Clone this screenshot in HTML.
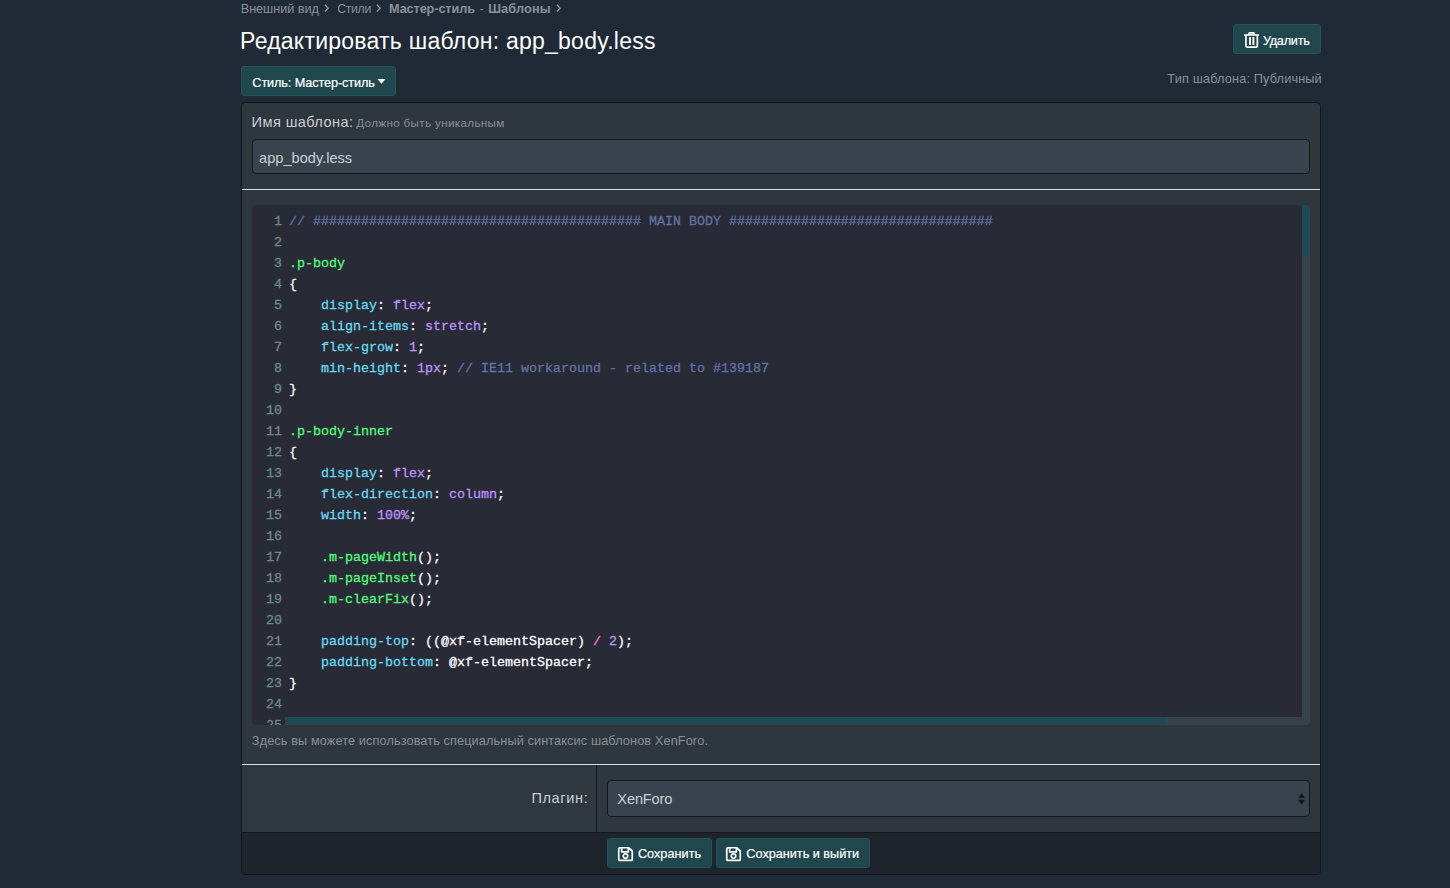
<!DOCTYPE html>
<html lang="ru">
<head>
<meta charset="utf-8">
<title>Редактировать шаблон: app_body.less</title>
<style>
*{box-sizing:border-box;margin:0;padding:0}
html,body{width:1450px;height:888px;overflow:hidden}
body{background:#202a36;color:#c9ced3;font-family:"Liberation Sans",sans-serif;font-size:15px;position:relative}
.t{position:absolute;white-space:nowrap;line-height:20px;height:20px}
.g{color:#8b9096}
.w{color:#fff}
.l{color:#c9ced3}
svg{position:absolute;overflow:visible}
.btn{position:absolute;display:block;padding:0;font:inherit;color:inherit;height:30px;background:#1f474d;border:1px solid #235258;border-radius:3px}
.box{position:absolute;left:241px;top:102px;width:1080px;height:773px;background:#2e363e;border:1px solid #13161d;border-radius:4px;overflow:hidden}
.input{position:absolute;background:#39434d;border:1px solid #15171f;border-radius:4px}
.hr{position:absolute;left:0;width:1078px;height:1px;background:#dcdcdc}
.cm{position:absolute;left:10px;top:102px;width:1058px;height:520px;background:#282a36;border-radius:4px;overflow:hidden;font-family:"Liberation Mono",monospace;font-size:13.333px;-webkit-text-stroke:0.3px;color:#f8f8f2}
.cm pre{position:absolute;left:37px;font-family:inherit;font-size:inherit;line-height:21px;height:21px;white-space:pre}
.cm .ln{position:absolute;left:0;width:30px;text-align:right;line-height:21px;height:21px;color:#6d8a88}
.c{color:#6272a4}.q{color:#50fa7b}.p{color:#66d9ef}.a{color:#bd93f9}.o{color:#ff79c6}.v{color:#fff}
.vtrack{position:absolute;right:0;top:0;width:8px;height:520px;background:#38424c}
.vthumb{position:absolute;right:0.6px;top:0.4px;width:7px;height:50.4px;background:#1d4a54;border-radius:2px}
.htrack{position:absolute;left:33px;bottom:0;width:1025px;height:8px;background:#38424c}
.hthumb{position:absolute;left:33.4px;bottom:0.6px;width:880.2px;height:7px;background:#1d4a54;border-radius:0 2px 2px 0}
.dt{position:absolute;left:0;top:662px;width:355px;height:68px;background:#2f373f;border-right:1px solid #13161d}
.foot{position:absolute;left:0;top:729px;width:1078px;height:43px;background:#1e242c;border-top:1px solid #13161d}
#del,#sty,#s1,#s2{-webkit-text-stroke:0.2px}
#c1{left:240.72px;top:-1.40px;font-size:12.70px;letter-spacing:-0.042px}
#c2{left:337.13px;top:-1.26px;font-size:12.30px;letter-spacing:-0.325px}
#c3{left:389.01px;top:-1.40px;font-size:12.70px;letter-spacing:-0.098px}
#c4{left:479.52px;top:-1.40px;font-size:12.70px;letter-spacing:0.000px}
#c5{left:488.18px;top:-1.40px;font-size:12.70px;letter-spacing:0.168px}
#ttl{left:240.08px;top:30.93px;font-size:23.00px;letter-spacing:0.240px}
#del{left:28.90px;top:5.50px;font-size:12.70px;letter-spacing:-0.252px}
#tip{left:1167.32px;top:68.60px;font-size:12.70px;letter-spacing:0.164px}
#sty{left:10.34px;top:5.60px;font-size:12.70px;letter-spacing:-0.112px}
#lbl{left:9.62px;top:8.74px;font-size:14.60px;letter-spacing:0.393px}
#lbh{left:114.25px;top:9.75px;font-size:11.70px;letter-spacing:0.318px}
#inp{left:6.08px;top:7.94px;font-size:14.60px;letter-spacing:-0.002px}
#hnt{left:9.85px;top:628.30px;font-size:12.70px;letter-spacing:0.124px}
#plg{left:289.41px;top:23.14px;font-size:14.60px;letter-spacing:0.603px}
#xf{left:9.35px;top:7.74px;font-size:14.60px;letter-spacing:-0.156px}
#s1{left:29.89px;top:4.60px;font-size:12.70px;letter-spacing:0.020px}
#s2{left:29.34px;top:4.60px;font-size:12.70px;letter-spacing:-0.012px}
</style>
</head>
<body>
<nav class="crumbs">
<a class="t g" id="c1">Внешний вид</a>
<svg id="ch1" style="left:324.0px;top:4.3px" width="5" height="8" viewBox="0 0 5 8"><path d="M0.9 0.8L4.1 4.15L0.9 7.5" fill="none" stroke="#969ba1" stroke-width="1.3"/></svg>
<a class="t g" id="c2">Стили</a>
<svg id="ch2" style="left:376.1px;top:4.3px" width="5" height="8" viewBox="0 0 5 8"><path d="M0.9 0.8L4.1 4.15L0.9 7.5" fill="none" stroke="#969ba1" stroke-width="1.3"/></svg>
<a class="t g" id="c3"><b>Мастер-стиль</b></a>
<span class="t g" id="c4">-</span>
<a class="t g" id="c5"><b>Шаблоны</b></a>
<svg id="ch3" style="left:555.9px;top:4.3px" width="5" height="8" viewBox="0 0 5 8"><path d="M0.9 0.8L4.1 4.15L0.9 7.5" fill="none" stroke="#969ba1" stroke-width="1.3"/></svg>
</nav>
<header>
<h1 class="t w" id="ttl" style="font-weight:400">Редактировать шаблон: app_body.less</h1>
<a class="btn" style="left:1233px;top:24px;width:88px"><svg id="trash" style="left:9.8px;top:7px" width="15.1" height="16" viewBox="0 0 15.1 16"><path d="M4.3 3L5.3 0.8H9.8L10.8 3" fill="#9aa9ad" stroke="#fff" stroke-width="1.4"/><path d="M0 3H15.1 M1.95 3V13.9Q1.95 15.15 3.2 15.15H12.1Q13.35 15.15 13.35 13.9V3" fill="none" stroke="#fff" stroke-width="1.7"/><path d="M5.95 4.9V13 M9.4 4.9V13" fill="none" stroke="#fff" stroke-width="1.9"/></svg><span class="t w" id="del">Удалить</span></a>
<span class="t g" id="tip">Тип шаблона: Публичный</span>
<a class="btn" style="left:241px;top:66px;width:155px"><span class="t w" id="sty">Стиль: Мастер-стиль</span><svg id="caret" style="left:134.5px;top:12.3px" width="9" height="5" viewBox="0 0 9 5"><path d="M0.4 0h8.2L4.5 4.8z" fill="#fff"/></svg></a>
</header>
<form class="box">
<label class="t l" id="lbl">Имя шаблона:</label>
<span class="t g" id="lbh">Должно быть уникальным</span>
<div class="input" style="left:10px;top:36px;width:1058px;height:35px"><span class="t l" id="inp">app_body.less</span></div>
<div class="hr" style="top:86px"></div>
<div class="cm" id="cm">
<div class="ln" style="top:5.5px">1</div><pre style="top:5.5px"><span class="c">// ######################################### MAIN BODY #################################</span></pre>
<div class="ln" style="top:26.5px">2</div>
<div class="ln" style="top:47.5px">3</div><pre style="top:47.5px"><span class="q">.p-body</span></pre>
<div class="ln" style="top:68.5px">4</div><pre style="top:68.5px">{</pre>
<div class="ln" style="top:89.5px">5</div><pre style="top:89.5px">    <span class="p">display</span>: <span class="a">flex</span>;</pre>
<div class="ln" style="top:110.5px">6</div><pre style="top:110.5px">    <span class="p">align-items</span>: <span class="a">stretch</span>;</pre>
<div class="ln" style="top:131.5px">7</div><pre style="top:131.5px">    <span class="p">flex-grow</span>: <span class="a">1</span>;</pre>
<div class="ln" style="top:152.5px">8</div><pre style="top:152.5px">    <span class="p">min-height</span>: <span class="a">1px</span>; <span class="c">// IE11 workaround - related to #139187</span></pre>
<div class="ln" style="top:173.5px">9</div><pre style="top:173.5px">}</pre>
<div class="ln" style="top:194.5px">10</div>
<div class="ln" style="top:215.5px">11</div><pre style="top:215.5px"><span class="q">.p-body-inner</span></pre>
<div class="ln" style="top:236.5px">12</div><pre style="top:236.5px">{</pre>
<div class="ln" style="top:257.5px">13</div><pre style="top:257.5px">    <span class="p">display</span>: <span class="a">flex</span>;</pre>
<div class="ln" style="top:278.5px">14</div><pre style="top:278.5px">    <span class="p">flex-direction</span>: <span class="a">column</span>;</pre>
<div class="ln" style="top:299.5px">15</div><pre style="top:299.5px">    <span class="p">width</span>: <span class="a">100%</span>;</pre>
<div class="ln" style="top:320.5px">16</div>
<div class="ln" style="top:341.5px">17</div><pre style="top:341.5px">    <span class="q">.m-pageWidth</span>();</pre>
<div class="ln" style="top:362.5px">18</div><pre style="top:362.5px">    <span class="q">.m-pageInset</span>();</pre>
<div class="ln" style="top:383.5px">19</div><pre style="top:383.5px">    <span class="q">.m-clearFix</span>();</pre>
<div class="ln" style="top:404.5px">20</div>
<div class="ln" style="top:425.5px">21</div><pre style="top:425.5px">    <span class="p">padding-top</span>: ((<span class="v">@xf-elementSpacer</span>) <span class="o">/</span> <span class="a">2</span>);</pre>
<div class="ln" style="top:446.5px">22</div><pre style="top:446.5px">    <span class="p">padding-bottom</span>: <span class="v">@xf-elementSpacer</span>;</pre>
<div class="ln" style="top:467.5px">23</div><pre style="top:467.5px">}</pre>
<div class="ln" style="top:488.5px">24</div>
<div class="ln" style="top:509.5px">25</div>
<div class="vtrack"></div><div class="vthumb"></div>
<div class="htrack"></div><div class="hthumb"></div>
</div>
<p class="t g" id="hnt">Здесь вы можете использовать специальный синтаксис шаблонов XenForo.</p>
<div class="hr" style="top:661px"></div>
<div class="dt"><label class="t l" id="plg">Плагин:</label></div>
<div class="input" style="left:365px;top:677px;width:703px;height:37px"><span class="t l" id="xf">XenForo</span><svg id="sel" style="left:690px;top:11.5px" width="7" height="12" viewBox="0 0 7 12"><path d="M0.1 4.8h6.8L3.5 0.3zM0.1 6.8h6.8L3.5 11.6z" fill="#151515"/></svg></div>
<div class="foot">
<button type="button" class="btn" style="left:365px;top:5px;width:105px"><svg id="sv1" style="left:9.9px;top:7.9px" width="15" height="14.2" viewBox="0 0 15 14.2"><path d="M0.75 1.8Q0.75 0.75 1.8 0.75H10.6L14.25 4V12.4Q14.25 13.45 13.2 13.45H1.8Q0.75 13.45 0.75 12.4Z M3.65 0.75V4.8H10.35V0.75" fill="none" stroke="#fff" stroke-width="1.7" stroke-linejoin="round"/><circle cx="7.5" cy="9.1" r="2.25" fill="none" stroke="#fff" stroke-width="1.6"/></svg><span class="t w" id="s1">Сохранить</span></button>
<button type="button" class="btn" style="left:474px;top:5px;width:154px"><svg id="sv2" style="left:9.4px;top:7.9px" width="15" height="14.2" viewBox="0 0 15 14.2"><path d="M0.75 1.8Q0.75 0.75 1.8 0.75H10.6L14.25 4V12.4Q14.25 13.45 13.2 13.45H1.8Q0.75 13.45 0.75 12.4Z M3.65 0.75V4.8H10.35V0.75" fill="none" stroke="#fff" stroke-width="1.7" stroke-linejoin="round"/><circle cx="7.5" cy="9.1" r="2.25" fill="none" stroke="#fff" stroke-width="1.6"/></svg><span class="t w" id="s2">Сохранить и выйти</span></button>
</div>
</form>
</body>
</html>
